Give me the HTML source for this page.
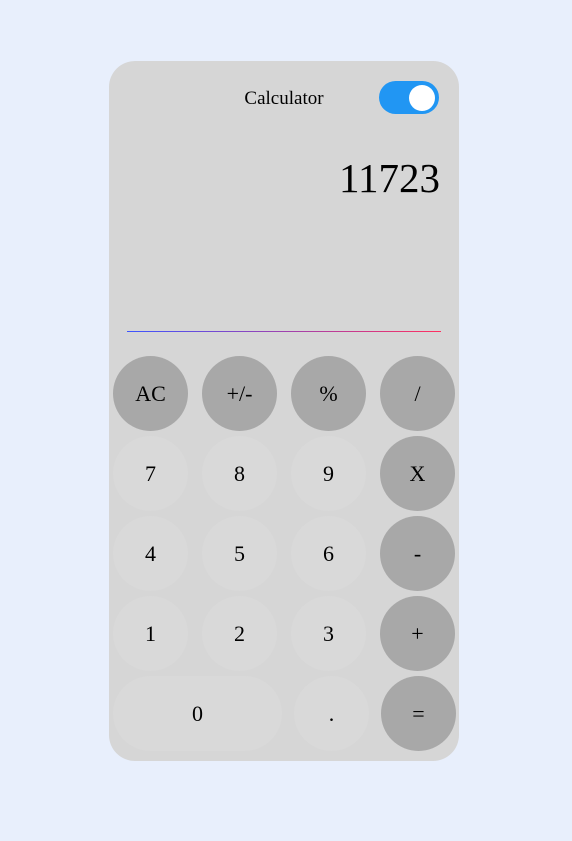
<!DOCTYPE html>
<html><head><meta charset="utf-8"><style>
html,body{margin:0;padding:0}
body{width:572px;height:841px;background:#e8effc;position:relative;font-family:"Liberation Serif",serif;overflow:hidden}
.card{position:absolute;left:109px;top:61px;width:350px;height:700px;background:#d6d6d6;border-radius:26px}
.title{position:absolute;left:0;width:568px;top:88px;text-align:center;font-size:19px;color:#000}
.tog{position:absolute;left:379px;top:81px;width:60px;height:33px;border-radius:17px;background:#2196f3}
.knob{position:absolute;left:30px;top:4px;width:26px;height:26px;border-radius:50%;background:#fff}
.disp{position:absolute;right:132px;top:154px;font-size:41px;color:#000}
.line{position:absolute;left:127px;top:331px;width:314px;height:1.2px;background:linear-gradient(90deg,#3d55ff,#ff3060)}
.b{position:absolute;width:75px;height:75px;border-radius:38px;background:#d9d9d9;display:flex;align-items:center;justify-content:center;font-size:22px;color:#000}
.o{background:#a8a8a8}
</style></head><body>
<div class="card"></div>
<div class="title">Calculator</div>
<div class="tog"><div class="knob"></div></div>
<div class="disp">11723</div>
<div class="line"></div>
<div class="b o" style="left:113px;top:356px">AC</div>
<div class="b o" style="left:202px;top:356px">+/-</div>
<div class="b o" style="left:291px;top:356px">%</div>
<div class="b o" style="left:380px;top:356px">/</div>
<div class="b" style="left:113px;top:436px">7</div>
<div class="b" style="left:202px;top:436px">8</div>
<div class="b" style="left:291px;top:436px">9</div>
<div class="b o" style="left:380px;top:436px">X</div>
<div class="b" style="left:113px;top:516px">4</div>
<div class="b" style="left:202px;top:516px">5</div>
<div class="b" style="left:291px;top:516px">6</div>
<div class="b o" style="left:380px;top:516px">-</div>
<div class="b" style="left:113px;top:596px">1</div>
<div class="b" style="left:202px;top:596px">2</div>
<div class="b" style="left:291px;top:596px">3</div>
<div class="b o" style="left:380px;top:596px">+</div>
<div class="b" style="left:113px;top:676px;width:169px">0</div>
<div class="b" style="left:294px;top:676px">.</div>
<div class="b o" style="left:381px;top:676px">=</div>
</body></html>
